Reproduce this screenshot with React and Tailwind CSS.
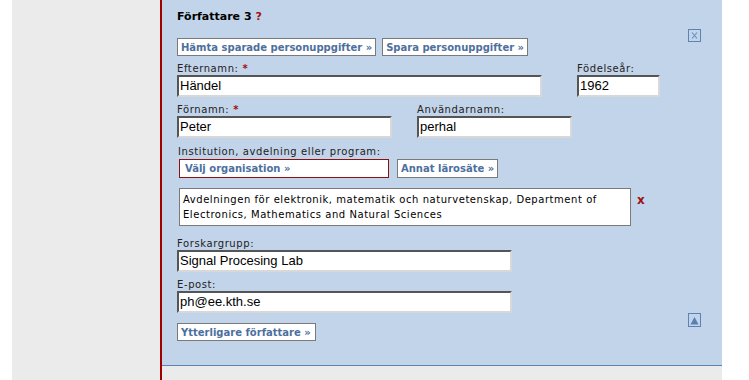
import React from 'react';

const VERD = "font-['DejaVu_Sans',_Verdana,_sans-serif]";
const ARIAL = "font-['Liberation_Sans',_Arial,_sans-serif]";

const Label = ({ children, req }) => (
  <div className={`${VERD} text-[10px] leading-[12px] text-[#222] tracking-[0.6px]`}>
    {children}
    {req && <span className="text-[#a01010] font-bold ml-1">*</span>}
  </div>
);

const Field = ({ value, w }) => (
  <div
    className={`h-[22px] bg-white border-2 border-t-[#555] border-l-[#555] border-b-[#d8d8d8] border-r-[#d8d8d8] px-[1px] flex items-center ${ARIAL} text-[13px] text-black`}
    style={{ width: w }}
  >
    {value}
  </div>
);

const Btn = ({ children, red, className = '' }) => (
  <div
    className={`inline-flex items-center bg-white border ${red ? 'border-[#8b1010]' : 'border-[#7a7a7a]'} px-[3px] ${VERD} text-[10px] font-bold text-[#4d6f9e] whitespace-nowrap ${className}`}
  >
    {children}
  </div>
);

const App = () => {
  return (
    <div className="flex w-[749px] h-[380px] bg-white overflow-hidden">
      <div className="w-[12px] bg-white" />
      <div className="w-[148px] bg-[#ebebeb]" />
      <div className="w-[2px] bg-[#a00000]" />
      <div className="w-[560px] bg-[#ebebeb] flex flex-col">
        <div className="h-[366px] bg-[#c2d4e9] border-b border-[#5f82b5] pl-[15px] pt-[10px] flex">
          <div className="flex flex-col w-[511px]">
            <div className={`${VERD} text-[11px] font-bold leading-[14px] text-black`}>
              Författare 3 <span className="text-[#a01010]">?</span>
            </div>

            <div className="flex gap-[6px] mt-[14px]">
              <Btn className="h-[18px]">Hämta sparade personuppgifter »</Btn>
              <Btn className="h-[18px]">Spara personuppgifter »</Btn>
            </div>

            <div className="flex mt-[7px]">
              <div>
                <Label req>Efternamn:</Label>
                <Field value="Händel" w={365} />
              </div>
              <div className="ml-[35px]">
                <Label>Födelseår:</Label>
                <Field value="1962" w={83} />
              </div>
            </div>

            <div className="flex mt-[7px]">
              <div>
                <Label req>Förnamn:</Label>
                <Field value="Peter" w={215} />
              </div>
              <div className="ml-[25px]">
                <Label>Användarnamn:</Label>
                <Field value="perhal" w={155} />
              </div>
            </div>

            <div className="mt-[8px] pl-[1px]">
              <Label>Institution, avdelning eller program:</Label>
            </div>
            <div className="flex gap-[8px] pl-[2px] mt-[1px]">
              <Btn red className="h-[19px] w-[210px] pl-[5px]">Välj organisation »</Btn>
              <Btn className="h-[19px]">Annat lärosäte »</Btn>
            </div>

            <div className="flex items-start mt-[10px] pl-[2px]">
              <div className={`w-[452px] h-[38px] bg-white border border-[#7a7a7a] px-[3px] pt-[3px] ${VERD} text-[10px] leading-[15px] text-black tracking-[0.55px]`}>
                Avdelningen för elektronik, matematik och naturvetenskap, Department of Electronics, Mathematics and Natural Sciences
              </div>
              <div className={`ml-[6px] mt-[6px] ${VERD} text-[12px] font-bold text-[#a01010] leading-[12px]`}>x</div>
            </div>

            <div className="mt-[12px]">
              <Label>Forskargrupp:</Label>
              <Field value="Signal Procesing Lab" w={335} />
            </div>

            <div className="mt-[7px]">
              <Label>E-post:</Label>
              <Field value="ph@ee.kth.se" w={335} />
            </div>

            <div className="flex mt-[10px]">
              <Btn className="h-[18px] pr-[4px]">Ytterligare författare »</Btn>
            </div>
          </div>

          <div className="flex flex-col">
            <div className="mt-[19px] w-[13px] h-[13px] border border-[#5f82b5] flex items-center justify-center">
              <svg width="9" height="9" viewBox="0 0 9 9">
                <path d="M2 1.5 L7 7.5 M7 1.5 L2 7.5" stroke="#6d8fc0" strokeWidth="1.1" />
              </svg>
            </div>
            <div className="mt-[271px] w-[13px] h-[14px] border border-[#5f82b5] flex items-center justify-center">
              <svg width="9" height="9" viewBox="0 0 9 9">
                <path d="M4.5 1 L8.5 8.5 L0.5 8.5 Z" fill="#5a7fb5" />
              </svg>
            </div>
          </div>
        </div>
      </div>
      <div className="flex-1 bg-white" />
    </div>
  );
};

export default App;
